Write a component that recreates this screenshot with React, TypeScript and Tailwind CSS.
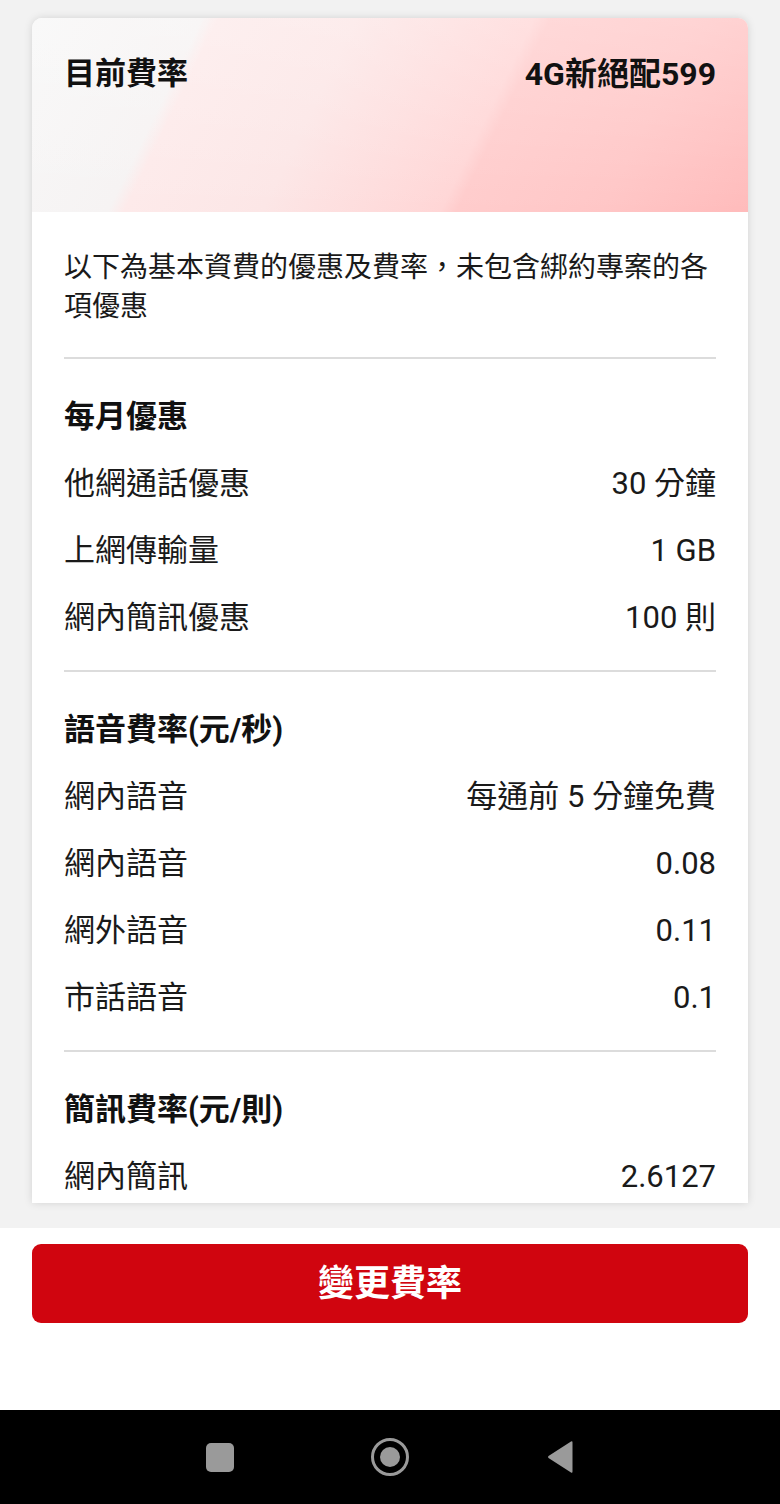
import { ReactNode } from 'react';

const font = "font-['Roboto','Noto_Sans_CJK_TC',sans-serif]";

type Row = { label: string; value: string };

const sections: { title: string; rows: Row[] }[] = [
  {
    title: '每月優惠',
    rows: [
      { label: '他網通話優惠', value: '30 分鐘' },
      { label: '上網傳輸量', value: '1 GB' },
      { label: '網內簡訊優惠', value: '100 則' },
    ],
  },
  {
    title: '語音費率(元/秒)',
    rows: [
      { label: '網內語音', value: '每通前 5 分鐘免費' },
      { label: '網內語音', value: '0.08' },
      { label: '網外語音', value: '0.11' },
      { label: '市話語音', value: '0.1' },
    ],
  },
  {
    title: '簡訊費率(元/則)',
    rows: [{ label: '網內簡訊', value: '2.6127' }],
  },
];

function Divider() {
  return <div className="h-[2px] bg-[#dcdcdc]" />;
}

function Section({ title, rows, last }: { title: string; rows: Row[]; last?: boolean }): ReactNode {
  return (
    <div>
      <h2 className="mt-[38px] text-[31px] leading-[40px] font-bold text-[#111]">{title}</h2>
      <div className="mt-[14px] mb-[18px]">
        {rows.map((r, i) => (
          <div key={i} className="h-[67px] flex items-center justify-between text-[31px] text-[#1a1a1a]">
            <span>{r.label}</span>
            <span>{r.value}</span>
          </div>
        ))}
      </div>
      {!last && <Divider />}
    </div>
  );
}

export default function App() {
  return (
    <div className={`w-[780px] h-[1504px] flex flex-col bg-white ${font}`}>
      {/* Scroll area */}
      <div className="h-[1228px] flex flex-col bg-[#f2f2f2] pt-[18px] pb-[25px] px-8">
        <div className="flex-1 overflow-hidden bg-white rounded-t-[10px] shadow-[0_0_8px_rgba(0,0,0,0.13)]">
          {/* Header */}
          <div className="relative h-[194px] overflow-hidden bg-[linear-gradient(116deg,#f7f7f7_0%,#f6f3f3_21%,#fdeaea_23%,#fce6e6_40%,#fde2e2_45%,#ffd6d6_62%,#ffcccc_64%,#ffc6c6_82%,#ffbbbb_100%)]">
            <div className="absolute inset-0 bg-[linear-gradient(180deg,rgba(255,255,255,0.25)_0%,rgba(255,255,255,0)_100%)]" />
            <div className="relative flex items-start justify-between px-8 pt-[36px]">
              <span className="text-[31px] leading-[40px] font-bold text-[#111]">目前費率</span>
              <span className="text-[32px] leading-[40px] font-bold text-[#111]">4G新絕配599</span>
            </div>
          </div>

          {/* Body */}
          <div className="px-8">
            <p className="pt-[36px] text-[28px] leading-[39px] text-[#1a1a1a]">
              以下為基本資費的優惠及費率，未包含綁約專案的各項優惠
            </p>
            <div className="mt-[31px]">
              <Divider />
            </div>
            {sections.map((s, i) => (
              <Section key={i} title={s.title} rows={s.rows} last={i === sections.length - 1} />
            ))}
          </div>
        </div>
      </div>

      {/* Bottom action */}
      <div className="flex-1 bg-white px-8 pt-4">
        <button className="w-full h-[79px] rounded-[9px] bg-[#d0050f] text-white text-[36px] font-bold">
          變更費率
        </button>
      </div>

      {/* Android nav bar */}
      <div className="h-[94px] bg-black flex items-center justify-center">
        <div className="flex items-center">
          <div className="w-[28px] h-[29px] rounded-[5px] bg-[#9a9a9a]" />
          <svg width="40" height="40" viewBox="0 0 40 40" className="ml-[136px]">
            <circle cx="20" cy="20" r="17.5" fill="none" stroke="#9a9a9a" strokeWidth="3" />
            <circle cx="20" cy="20" r="10" fill="#9a9a9a" />
          </svg>
          <svg width="28" height="34" viewBox="0 0 28 34" className="ml-[136px]">
            <path d="M25 1.5 L2.5 16 Q1.5 17 2.5 18 L25 32.5 Q26.5 33.5 26.5 31.5 L26.5 2.5 Q26.5 0.5 25 1.5 Z" fill="#9a9a9a" />
          </svg>
        </div>
      </div>
    </div>
  );
}
